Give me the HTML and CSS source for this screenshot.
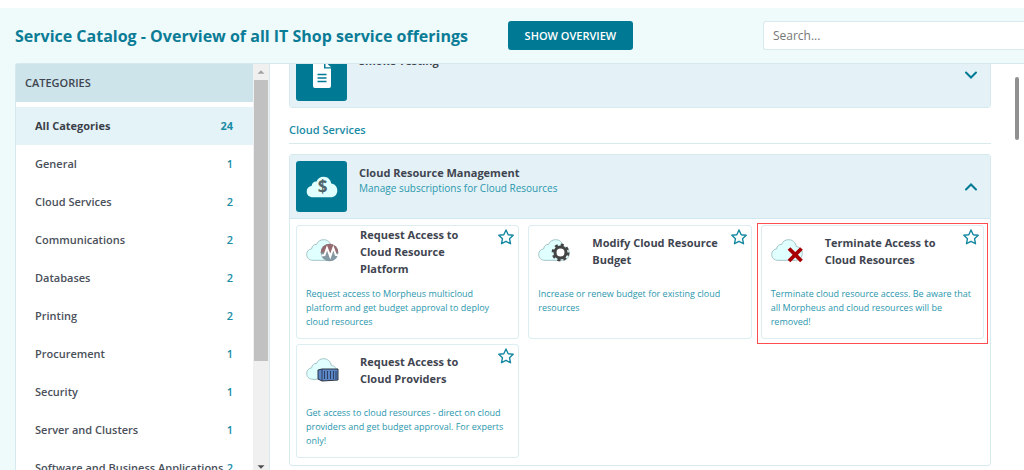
FILE: index.html
```html
<!DOCTYPE html>
<html lang="en">
<head>
<meta charset="utf-8">
<title>Service Catalog</title>
<link rel="stylesheet" href="styles.css">
</head>
<body>
<svg class="defs" aria-hidden="true">
  <symbol id="cloud" viewBox="0 0 32 22"><path d="M7 21.3C3 21.3.7 18.8.7 15.5c0-3 2-5.300 5-5.700C5.900 7 8 5.200 10.500 5.500 11.700 2.500 14.300.7 17.500.7c4.200 0 7.300 2.900 7.700 6.800 3.500.3 6.100 3.200 6.100 6.900 0 3.900-2.800 6.900-6.500 6.900z"/></symbol>
  <symbol id="star" viewBox="0 0 16 16"><path d="M8 1l2.200 4.700 5 .6-3.700 3.400 1 5L8 12.300l-4.500 2.400 1-5L.8 6.300l5-.6z"/></symbol>
</svg>
<div class="page">
  <header class="topbar">
    <h1 class="title">Service Catalog - Overview of all IT Shop service offerings</h1>
    <button class="overview" type="button">SHOW OVERVIEW</button>
    <input class="search" type="text" placeholder="Search..." aria-label="Search">
  </header>
  <div class="content">
    <aside class="sidebar">
      <nav class="categories" aria-label="Categories">
        <h2 class="side-title">CATEGORIES</h2>
        <a class="cat active" href="#"><span>All Categories</span><span class="count">24</span></a>
        <a class="cat" href="#"><span>General</span><span class="count">1</span></a>
        <a class="cat" href="#"><span>Cloud Services</span><span class="count">2</span></a>
        <a class="cat" href="#"><span>Communications</span><span class="count">2</span></a>
        <a class="cat" href="#"><span>Databases</span><span class="count">2</span></a>
        <a class="cat" href="#"><span>Printing</span><span class="count">2</span></a>
        <a class="cat" href="#"><span>Procurement</span><span class="count">1</span></a>
        <a class="cat" href="#"><span>Security</span><span class="count">1</span></a>
        <a class="cat" href="#"><span>Server and Clusters</span><span class="count">1</span></a>
        <a class="cat" href="#"><span>Software and Business Applications</span><span class="count">2</span></a>
      </nav>
      <div class="scrollbar">
        <svg class="arrow" viewBox="0 0 16 16"><path d="M4 10l4-4 4 4z" fill="#a3a3a3"/></svg>
        <div class="thumb"></div>
        <svg class="arrow" viewBox="0 0 16 16"><path d="M4 6l4 4 4-4z" fill="#505050"/></svg>
      </div>
    </aside>
    <main class="main">
      <section class="group first">
        <div class="group-head">
          <div class="tile">
            <svg class="doc" viewBox="0 0 20 26"><path d="M1 2Q1 0 3 0h9v6.500h7V24q0 2-2 2H3q-2 0-2-2z" fill="#fff"/><path d="M13.500 0L19 5.200h-5.500z" fill="#fff"/><path d="M5.500 12.500h9M5.500 16h9M5.500 19.500h9" stroke="#007a94" stroke-width="1.300"/></svg>
          </div>
          <div class="group-text"><h3 class="group-name">Smoke Testing</h3></div>
          <button class="toggle" type="button" aria-label="Expand"><svg viewBox="0 0 14 14"><path d="M2 4.500l5 5 5-5"/></svg></button>
        </div>
      </section>
      <h2 class="section-title">Cloud Services</h2>
      <section class="group">
        <div class="group-head open">
          <div class="tile">
            <svg class="money" viewBox="0 0 32 22"><use href="#cloud" fill="#e0ffff"/><text x="16.500" y="17">$</text></svg>
          </div>
          <div class="group-text">
            <h3 class="group-name">Cloud Resource Management</h3>
            <p class="group-desc">Manage subscriptions for Cloud Resources</p>
          </div>
          <button class="toggle" type="button" aria-label="Collapse"><svg viewBox="0 0 14 14"><path d="M2 9.500l5-5 5 5"/></svg></button>
        </div>
        <div class="cards">
          <article class="card">
            <div class="card-head">
              <svg class="pic" viewBox="0 0 34 24"><use href="#cloud" class="cloud" width="32" height="22"/><circle cx="23.500" cy="13.500" r="8.800" fill="#8499a3"/><path d="M14.700 13.500a8.800 8.800 0 0 1 17.600 0z" fill="#966b70"/><path d="M15.500 16.500l3-.5 2.500-7 3.300 8.500 3-8.500 2.500 7 2.500.5" fill="none" stroke="#fff" stroke-width="2"/></svg>
              <h4 class="card-title">Request Access to Cloud Resource Platform</h4>
              <button class="fav" type="button" aria-label="Add to favorites"><svg><use href="#star"/></svg></button>
            </div>
            <p class="card-desc">Request access to Morpheus multicloud platform and get budget approval to deploy cloud resources</p>
          </article>
          <article class="card">
            <div class="card-head">
              <svg class="pic" viewBox="0 0 34 24"><use href="#cloud" class="cloud" width="32" height="22"/><circle cx="22.500" cy="13.500" r="5.500" fill="#fff" stroke="#444" stroke-width="3"/><circle cx="22.500" cy="13.500" r="7.700" fill="none" stroke="#444" stroke-width="2.400" stroke-dasharray="3.050 3"/></svg>
              <h4 class="card-title">Modify Cloud Resource Budget</h4>
              <button class="fav" type="button" aria-label="Add to favorites"><svg><use href="#star"/></svg></button>
            </div>
            <p class="card-desc">Increase or renew budget for existing cloud resources</p>
          </article>
          <article class="card marked">
            <div class="card-head">
              <svg class="pic" viewBox="0 0 34 24"><use href="#cloud" class="cloud" width="32" height="22"/><path d="M18 9.500l12.500 12.500M30.500 9.500L18 22" stroke="#a80000" stroke-width="3.800"/></svg>
              <h4 class="card-title">Terminate Access to Cloud Resources</h4>
              <button class="fav" type="button" aria-label="Add to favorites"><svg><use href="#star"/></svg></button>
            </div>
            <p class="card-desc">Terminate cloud resource access. Be aware that all Morpheus and cloud resources will be removed!</p>
          </article>
          <article class="card">
            <div class="card-head">
              <svg class="pic" viewBox="0 0 34 24"><use href="#cloud" class="cloud" width="32" height="22"/><path d="M12 12l4-1h16v11l-16 1-4-2z" fill="#5b87c8" stroke="#2d3440" stroke-width="1"/><path d="M16 11v12M18.500 13v8M21.500 13v8M24.500 13v8M27.500 13v8M30 13v8" stroke="#2d3f5e" stroke-width="1"/></svg>
              <h4 class="card-title">Request Access to Cloud Providers</h4>
              <button class="fav" type="button" aria-label="Add to favorites"><svg><use href="#star"/></svg></button>
            </div>
            <p class="card-desc">Get access to cloud resources - direct on cloud providers and get budget approval. For experts only!</p>
          </article>
        </div>
      </section>
      <div class="page-thumb"></div>
    </main>
  </div>
</div>
</body>
</html>
```
FILE: styles.css
```css
* { box-sizing: border-box; }
body {
  margin: 0;
  font-family: "Open Sans", "Noto Sans", sans-serif;
  font-size: 11px;
  color: #3f4550;
  background: #fff;
}
h1, h2, h3, h4, p { margin: 0; }
button { padding: 0; border: 0; background: none; font: inherit; cursor: pointer; }
.defs { position: absolute; width: 0; height: 0; }
.page {
  display: flex;
  flex-direction: column;
  height: 100vh;
  padding-top: 8px;
  overflow: hidden;
}
.topbar {
  display: flex;
  flex: none;
  align-items: center;
  height: 55px;
  padding-left: 15px;
  background: #effafb;
}
.title { font-size: 16px; font-weight: 700; color: #0a7c96; white-space: nowrap; }
.overview {
  width: 125px;
  height: 29px;
  margin-left: 40px;
  border-radius: 3px;
  background: #007a94;
  color: #fff;
  font-weight: 600;
}
.search {
  flex: 1;
  min-width: 0;
  height: 29px;
  margin-left: 130px;
  padding: 0 9px;
  border: 1px solid #d9eaee;
  border-right: 0;
  border-radius: 3px 0 0 3px;
  background: #fff;
  font: inherit;
  font-size: 12px;
}
.search::placeholder { color: #777; opacity: 1; }
.content { display: flex; flex: 1; min-height: 0; padding-left: 15px; background: #effafb; }
.sidebar {
  display: flex;
  flex: none;
  width: 255px;
  border: 1px solid #d7e9ed;
  border-bottom: 0;
  border-radius: 3px 0 0 0;
  background: #fff;
}
.categories { flex: 1; min-width: 0; overflow: hidden; }
.side-title {
  height: 38px;
  margin-bottom: 5px;
  padding-left: 9px;
  background: #cce4ea;
  font-size: 11px;
  font-weight: 600;
  line-height: 38px;
}
.cat {
  display: flex;
  justify-content: space-between;
  height: 38px;
  padding: 0 20px 0 19px;
  color: #4a505a;
  font-size: 11px;
  font-weight: 600;
  line-height: 38px;
  text-decoration: none;
  white-space: nowrap;
}
.active { background: #e4f3f8; color: #3a3f48; font-weight: 700; }
.count { color: #1a8ca5; }
.scrollbar {
  display: flex;
  flex-direction: column;
  width: 16px;
  padding: 0 1px;
  background: #f0f0f0;
}
.arrow { flex: none; width: 14px; height: 16px; }
.thumb { flex: 1; max-height: 281px; margin-bottom: auto; background: #c1c1c1; }
.scrollbar .arrow:last-child { margin-bottom: -5px; }
.main {
  position: relative;
  flex: 1;
  min-width: 0;
  padding: 0 33px 0 19px;
  border-top: 1px solid #d7e9ed;
  background: #fff;
  overflow: hidden;
}
.group { border: 1px solid #d7eaee; border-radius: 3px; }
.first { margin-top: -22px; }
.group-head {
  display: flex;
  align-items: center;
  height: 64px;
  padding: 0 12px 0 6px;
  background: #e4f2f7;
}
.open { border-bottom: 1px solid #cfe7ee; }
.tile {
  display: flex;
  align-items: center;
  justify-content: center;
  width: 51px;
  height: 51px;
  border-radius: 3px;
  background: #007a94;
}
.doc { width: 20px; height: 26px; }
.money { width: 32px; height: 22px; }
.money text { fill: #52656b; font-size: 17px; font-weight: 700; text-anchor: middle; }
.group-text { flex: 1; align-self: flex-start; padding: 10px 0 0 12px; }
.group-name { font-size: 11px; font-weight: 700; line-height: 16px; }
.group-desc { color: #2b97ad; font-size: 10px; line-height: 14px; }
.toggle { width: 14px; height: 14px; }
.toggle svg { display: block; fill: none; stroke: #007a94; stroke-width: 2; stroke-linecap: round; }
.section-title {
  height: 36px;
  margin-bottom: 10px;
  padding-top: 13px;
  border-bottom: 1px solid #d7eaee;
  color: #1a8ca5;
  font-size: 11px;
  font-weight: 600;
  line-height: 18px;
}
.cards {
  display: grid;
  grid-template-columns: repeat(3, 1fr);
  gap: 5px 9px;
  padding: 6px 6px 7px;
}
.card {
  position: relative;
  height: 114px;
  padding: 2px 4px 0 9px;
  border: 1px solid #dceef1;
  border-radius: 3px;
}
.marked::after {
  content: "";
  position: absolute;
  inset: -3px -5px -6px -5px;
  border: 1px solid #ff4d4d;
  pointer-events: none;
}
.card-head { display: flex; align-items: center; height: 46px; }
.pic { flex: none; width: 34px; height: 24px; }
.cloud { fill: #e0ffff; stroke: #a3c3c6; stroke-width: 1; }
.card-title { flex: 1; padding: 0 10px 0 20px; font-size: 11px; font-weight: 700; line-height: 17px; }
.fav { align-self: flex-start; width: 16px; height: 16px; margin-top: 1px; }
.fav svg { display: block; width: 16px; height: 16px; fill: #fff; stroke: #1487a1; stroke-width: 1.4; stroke-linejoin: round; }
.card-desc { padding: 13px 6px 0 0; color: #2b97ad; font-size: 9px; line-height: 14px; }
.page-thumb {
  position: absolute;
  top: 13px;
  right: 5px;
  width: 4px;
  height: 63px;
  border-radius: 2px;
  background: #909090;
}
```
